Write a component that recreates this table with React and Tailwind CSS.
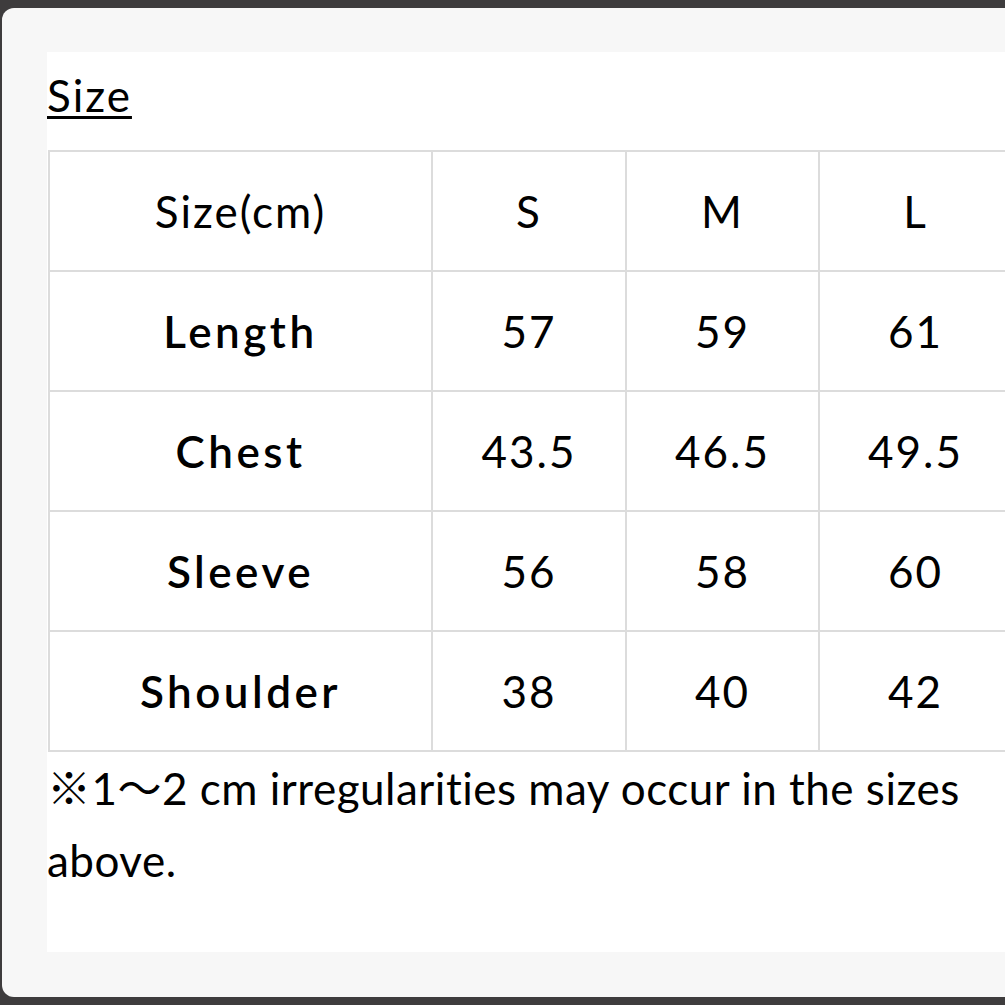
const rows = [
  { label: 'Length', values: ['57', '59', '61'] },
  { label: 'Chest', values: ['43.5', '46.5', '49.5'] },
  { label: 'Sleeve', values: ['56', '58', '60'] },
  { label: 'Shoulder', values: ['38', '40', '42'] },
];

const font = { fontFamily: '"Lato", "Noto Sans CJK JP", sans-serif' };

export default function App() {
  return (
    <div className="w-[1005px] h-[1005px] overflow-hidden bg-[#3e3c3d] pt-[8px] pl-[2px]" style={font}>
      <div className="w-[1060px] h-[989px] bg-[#f7f7f7] rounded-l-[12px] pl-[45px] pt-[44px]">
        <div className="w-[1000px] h-[900px] bg-white pt-[18px] text-black">
          <h2 className="text-[44px] leading-[50px] tracking-[2px] underline underline-offset-[4px] decoration-[3px] mb-[30px]">Size</h2>
          <table className="border-collapse ml-[1px] text-[44px] tracking-[2px]">
            <tbody>
              <tr className="h-[120px]">
                <td className="border-2 border-[#dcdcdc] w-[383px] text-center">Size(cm)</td>
                <td className="border-2 border-[#dcdcdc] w-[194px] text-center">S</td>
                <td className="border-2 border-[#dcdcdc] w-[193px] text-center">M</td>
                <td className="border-2 border-[#dcdcdc] w-[193px] text-center">L</td>
              </tr>
              {rows.map(r => (
                <tr key={r.label} className="h-[120px]">
                  <td className="border-2 border-[#dcdcdc] text-center font-semibold tracking-[3.5px]">{r.label}</td>
                  {r.values.map((v, i) => (
                    <td key={i} className="border-2 border-[#dcdcdc] text-center">{v}</td>
                  ))}
                </tr>
              ))}
            </tbody>
          </table>
          <p className="text-[44px] leading-[72px] tracking-[0.5px] w-[930px]">※1〜2 cm irregularities may occur in the sizes above.</p>
        </div>
      </div>
    </div>
  );
}
